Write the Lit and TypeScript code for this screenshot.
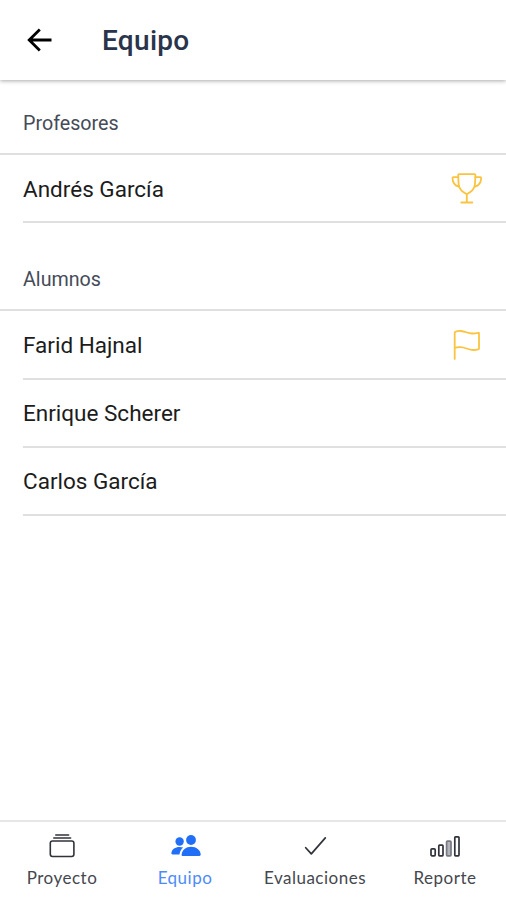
import { LitElement, html, css, svg, nothing } from "lit";
import { customElement, property } from "lit/decorators.js";
import { classMap } from "lit/directives/class-map.js";

const icons: Record<string, unknown> = {
  trophy: svg`<svg width="32" height="32" viewBox="0 0 32 32" fill="none" stroke="currentColor" stroke-width="1.8" stroke-linecap="round" stroke-linejoin="round">
    <path d="M8 2.200h15.600c.5 0 .9.4.8.9-.1 2.700-.2 6.200-.5 9.400-.5 5.300-4.100 7.300-8.100 9.700-4-2.400-7.600-4.400-8.100-9.700-.3-3.200-.4-6.700-.5-9.400 0-.5.3-.9.8-.9z"/>
    <path d="M7.300 5.200H2.400c-.6 0-.9.3-.9.900.2 4.100 2.500 7.600 6.300 8.400M24.400 5.200h4.900c.6 0 .9.3.9.900-.2 4.100-2.500 7.600-6.300 8.400M15.800 22.300v8M10.300 30.500h11"/></svg>`,
  flag: svg`<svg width="32" height="32" viewBox="0 0 32 32" fill="none" stroke="currentColor" stroke-width="1.800" stroke-linecap="round" stroke-linejoin="round">
    <path d="M3.700 29.900V4c0-.7.300-1.200 1-1.400 1.500-.6 3.200-.8 5.300-.6 4.300.4 6.800 2.400 11 2.500 2.300.1 4.300-.2 6-.7.600-.2 1 .1 1 .7v14.900c0 .5-.3.800-.8.900-2.600.8-5.600.9-8.400.2-3.300-.8-5.800-2.200-9.200-2.300-2.200-.1-4.200.1-5.900.7"/></svg>`,
  albums: svg`<svg width="32" height="26" viewBox="0 0 32 26" fill="none" stroke="currentColor" stroke-width="1.600" stroke-linecap="round">
    <rect x="4.300" y="8" width="23.600" height="15.500" rx="2.200"/><path d="M7.800 5h16.800M9.800 2h12.800"/></svg>`,
  people: svg`<svg width="32" height="26" viewBox="0 0 32 26" fill="currentColor">
    <circle cx="10.600" cy="8.500" r="4.200"/><circle cx="22" cy="7" r="4.900"/>
    <path d="M13.900 23c-.8 0-1.400-.7-1.300-1.600.5-4.400 4.300-7.700 9.500-7.700s9.100 3.300 9.600 7.600c.1.900-.5 1.700-1.400 1.700z"/>
    <path d="M3.700 21.400c-.9 0-1.500-.8-1.300-1.700.7-3.400 3.700-5.600 8.200-5.600 1.400 0 2.600.2 3.600.5-2.100 1.600-3.200 3.800-3.700 6.800z"/></svg>`,
  check: svg`<svg width="32" height="26" viewBox="0 0 32 26" fill="none" stroke="currentColor" stroke-width="1.700" stroke-linecap="round" stroke-linejoin="round">
    <path d="M6.700 14.700l5.600 6.200L26.300 4.900"/></svg>`,
  bars: svg`<svg width="32" height="26" viewBox="0 0 32 26" fill="none" stroke="currentColor" stroke-width="1.700">
    <rect x="2" y="15.800" width="4.200" height="7" rx="1"/><rect x="9.800" y="12.200" width="4.200" height="10.600" rx=".8"/>
    <rect class="soft" x="17.600" y="8.200" width="4.400" height="14.600" rx=".8"/><rect x="25.800" y="3.800" width="4.200" height="19" rx=".8"/></svg>`,
};

interface Member { name: string; icon?: string; }
interface Group { title: string; members: Member[]; }

const groups: Group[] = [
  { title: "Profesores", members: [{ name: "Andrés García", icon: "trophy" }] },
  { title: "Alumnos", members: [{ name: "Farid Hajnal", icon: "flag" }, { name: "Enrique Scherer" }, { name: "Carlos García" }] },
];

@customElement("team-group")
class TeamGroup extends LitElement {
  @property({ attribute: false }) group!: Group;
  static styles = css`
    :host { display: block; }
    h2 { margin: 0; height: 73px; box-sizing: border-box; padding: 9.600px 23px 0; border-bottom: 2px solid #e0e0e0;
      font-size: 19.700px; font-weight: 400; line-height: 64px; color: #454b58; }
    .row { margin-left: 23px; height: 68.100px; box-sizing: border-box; display: flex; align-items: center;
      justify-content: space-between; padding-right: 23px; border-bottom: 2px solid #e0e0e0; font-size: 22.500px; color: #1c1c1c; }
    .row span { padding-top: .6px; }
    .row .badge { display: flex; padding: 0; color: #fbc440; }
  `;
  render() {
    return html`<h2>${this.group.title}</h2>
      ${this.group.members.map((m) => html`<div class="row"><span>${m.name}</span>${m.icon ? html`<span class="badge">${icons[m.icon]}</span>` : nothing}</div>`)}`;
  }
}

const tabs = [
  { label: "Proyecto", icon: "albums" },
  { label: "Equipo", icon: "people", active: true },
  { label: "Evaluaciones", icon: "check" },
  { label: "Reporte", icon: "bars" },
];

@customElement("app-root")
class AppRoot extends LitElement {
  static styles = css`
    :host { display: flex; flex-direction: column; height: 900px; background: #fff; font-family: Roboto, sans-serif; }
    header { height: 80px; flex: none; display: flex; align-items: center; padding-left: 26px; box-sizing: border-box;
      box-shadow: 0 1px 4px rgba(0,0,0,.34); }
    .back { display: flex; width: 76px; color: #000; }
    h1 { margin: 0; font-size: 28px; font-weight: 500; letter-spacing: .3px; color: #2a344a; }
    main { flex: 1; padding-top: 2.400px; }
    team-group + team-group { margin-top: 15px; }
    nav { height: 80px; flex: none; box-sizing: border-box; border-top: 2px solid #e6e6e6; display: grid;
      grid-template-columns: 124px 122px 138px 122px; font-family: Lato, sans-serif; color: #44474e; }
    .tab { display: flex; flex-direction: column; align-items: center; padding-top: 11px; font-size: 17px; line-height: 20px; letter-spacing: .5px; }
    .tab span { margin-top: 9px; }
    .tab svg { color: #30333a; }
    .active, .active svg { color: #216ff7; }
    .active span { color: #4c8bf9; }
    .soft { fill: #b3b5bc; stroke: #777a84; }
  `;
  render() {
    return html`<header>
        <span class="back"><svg width="27" height="26" viewBox="0 0 27 26" fill="none" stroke="currentColor" stroke-width="2.800"><path d="M25.500 13H4M13.800 2.400L3.200 13l10.600 10.600"/></svg></span>
        <h1>Equipo</h1>
      </header>
      <main>${groups.map((g) => html`<team-group .group=${g}></team-group>`)}</main>
      <nav>${tabs.map((t) => html`<div class=${classMap({ tab: true, active: !!t.active })}>${icons[t.icon]}<span>${t.label}</span></div>`)}</nav>`;
  }
}
